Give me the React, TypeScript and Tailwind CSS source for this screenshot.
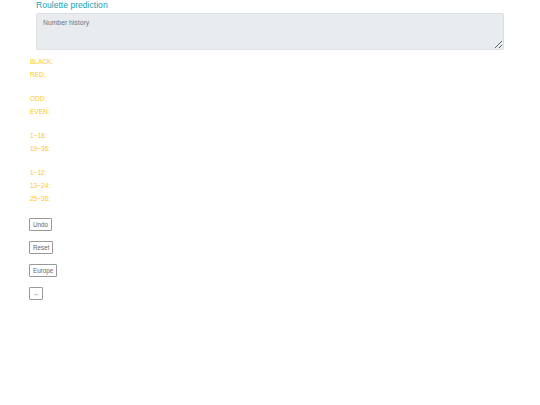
import React from 'react';

const groups = [
  ['BLACK:', 'RED:'],
  ['ODD:', 'EVEN:'],
  ['1~18:', '19~36:'],
  ['1~12:', '13~24:', '25~36:'],
];

const buttons = ['Undo', 'Reset', 'Europe', '↔'];

export default function App() {
  return (
    <div className="min-h-[405px] w-[540px] bg-white font-['Liberation_Sans',Arial,sans-serif]">
      {/* Header */}
      <div className="px-[36px]">
        <h1 className="text-[8.6px] leading-[11px] text-[#17a2b8]">Roulette prediction</h1>
        <textarea
          placeholder="Number history"
          className="mt-[2px] block h-[37px] w-[468px] rounded-[2px] border border-[#dcdfe3] bg-[#e9ecef] px-[6px] py-[4px] text-[6.8px] leading-[9px] text-[#495057] placeholder:text-[#6c757d] outline-none"
        />
      </div>

      {/* Stats */}
      <div className="mt-[5px] flex flex-col gap-[11px] px-[30px]">
        {groups.map((g, i) => (
          <div key={i} className="flex flex-col">
            {g.map(l => (
              <div key={l} className="h-[13px] text-[6.5px] leading-[13px] text-[#ffc720]">{l}</div>
            ))}
          </div>
        ))}
      </div>

      {/* Buttons */}
      <div className="mt-[13px] flex flex-col items-start gap-[10px] px-[29px]">
        {buttons.map(b => (
          <button key={b}
            className="h-[13px] rounded-[1px] border border-[#999] bg-white px-[3px] text-[6.3px] leading-[11px] text-[#666]">
            {b}
          </button>
        ))}
      </div>
    </div>
  );
}
